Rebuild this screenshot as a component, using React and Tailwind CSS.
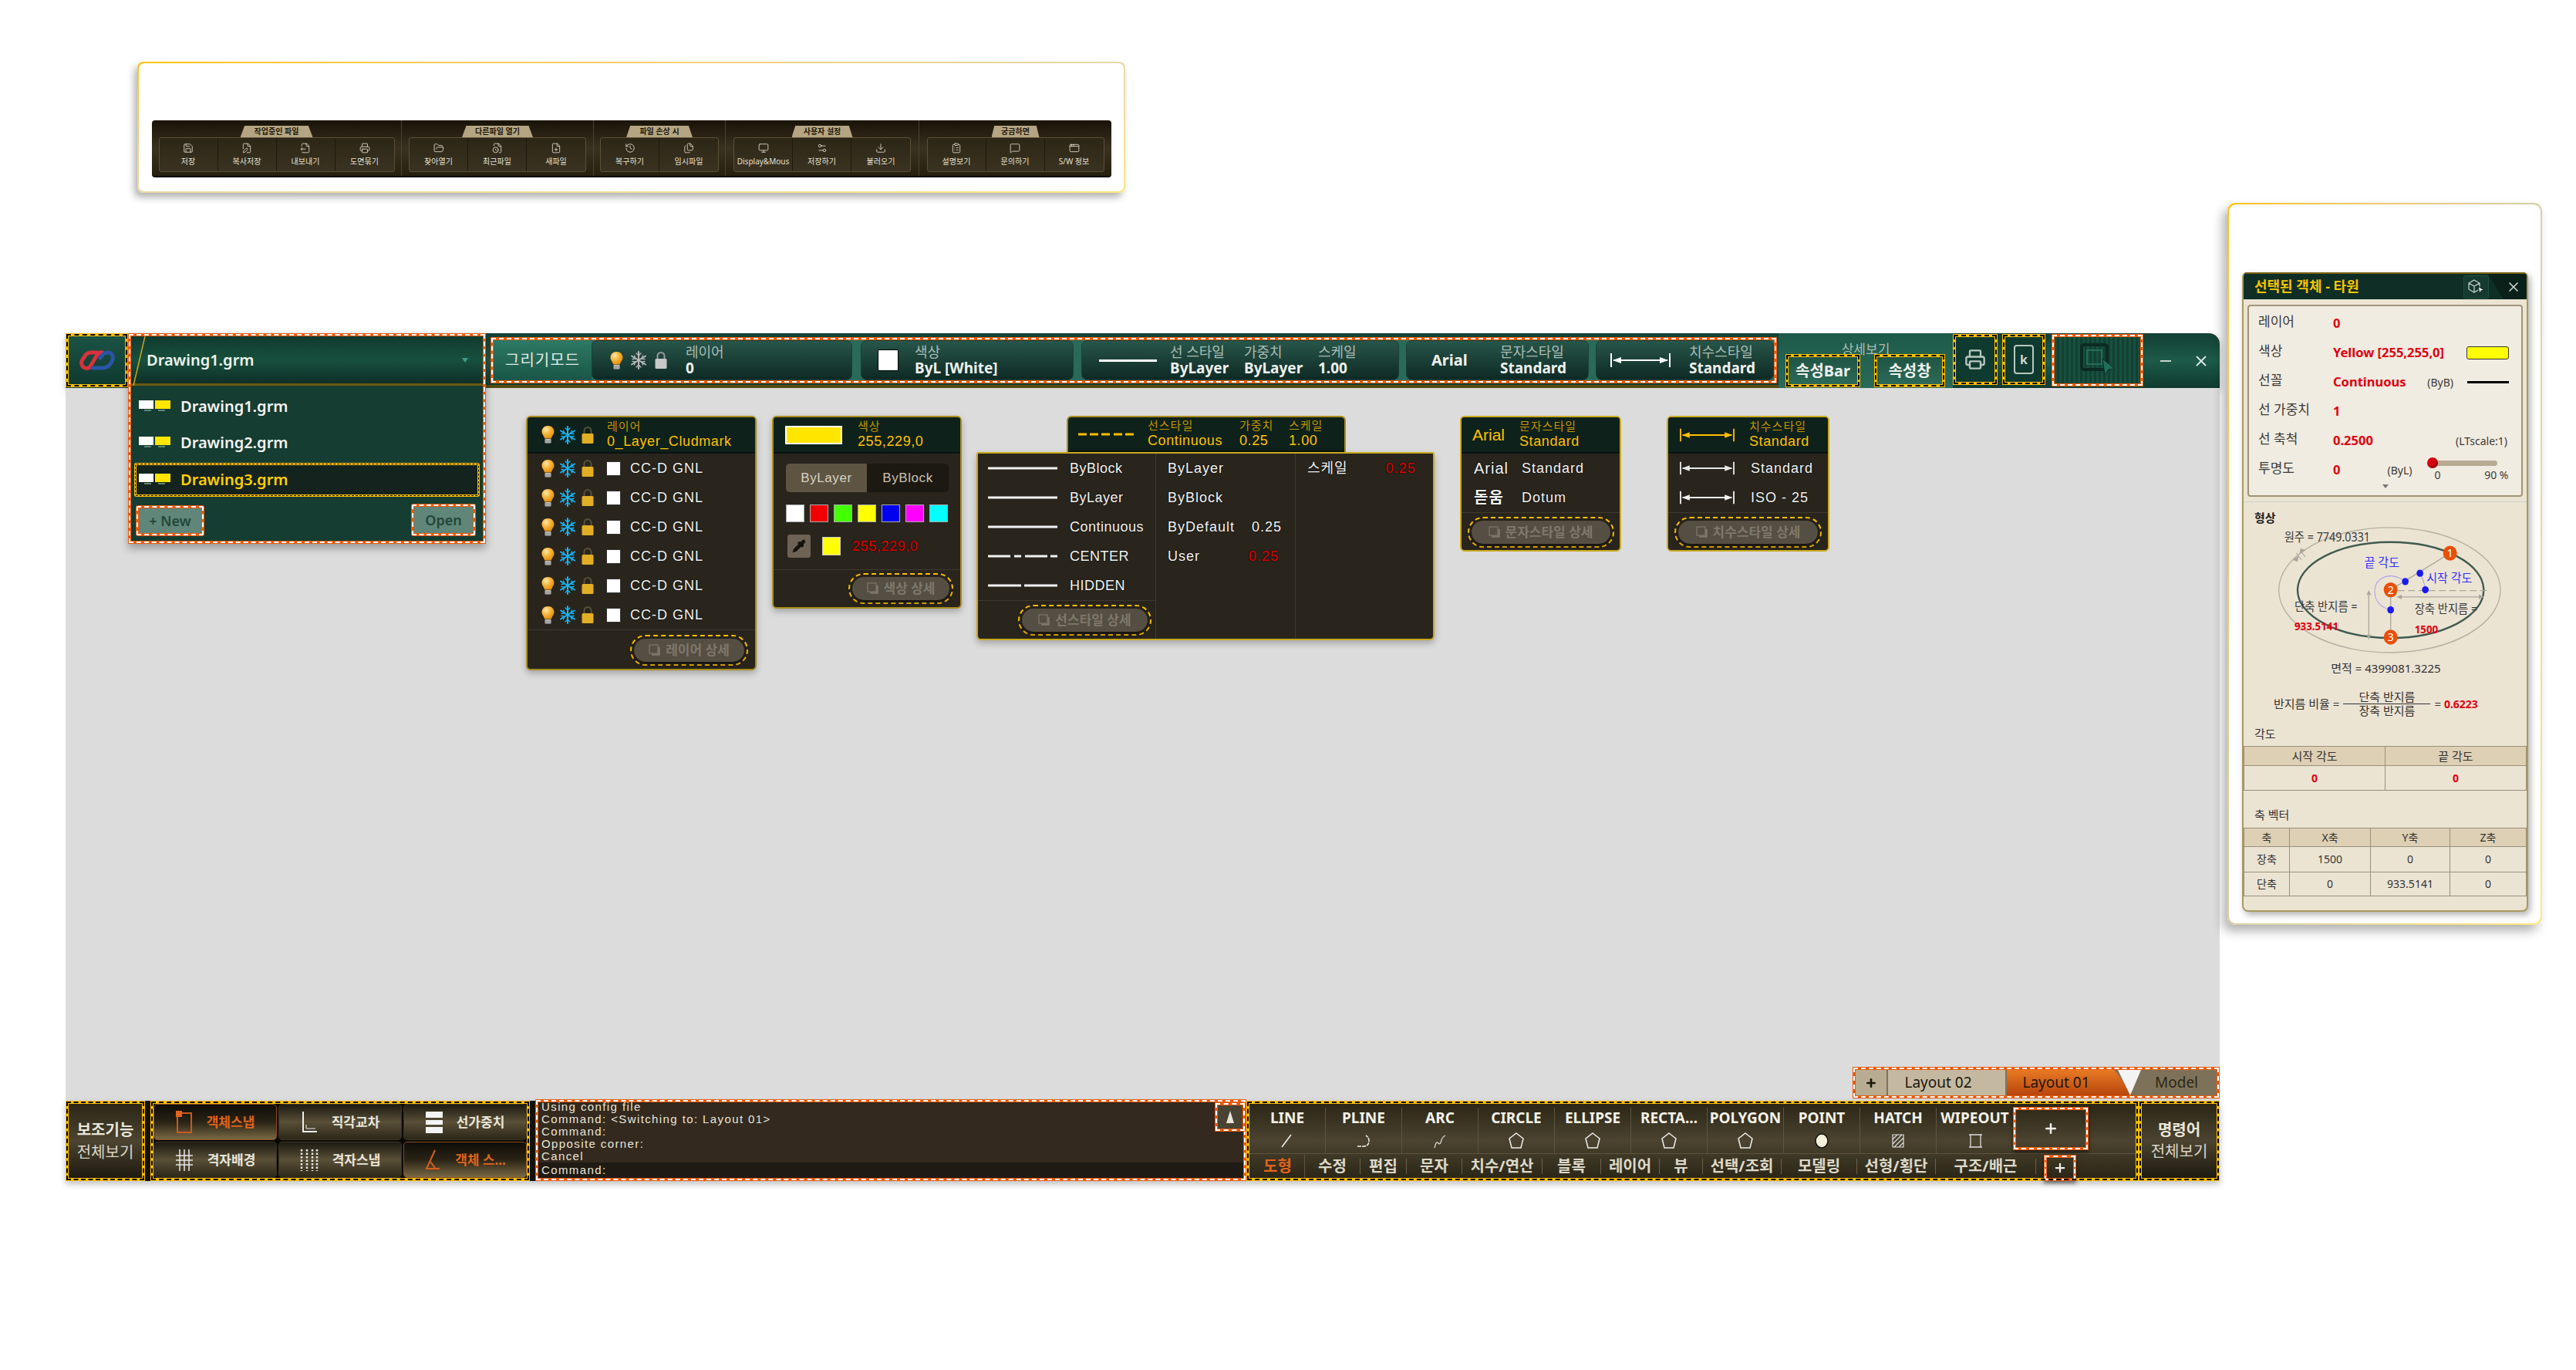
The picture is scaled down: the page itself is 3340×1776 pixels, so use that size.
import {
  Save, FilePen, FileOutput, Printer, FolderOpen, FileClock, FilePlus, History, Files,
  Monitor, Settings2, Download, ClipboardList, MessageSquare, AppWindow, X, Plus, Pipette,
} from "lucide-react";

const ORANGE = "border-[4px] border-[#e8590c] outline-2 outline-dashed outline-white outline-offset-[-3px]";
const YELLOW = "border-[4px] border-[#ffc000] outline-2 outline-dashed outline-black outline-offset-[-3px]";
const DOTUM = "font-['Liberation_Sans','Noto_Sans_CJK_KR',sans-serif]";

const toolbar = [
  { title: "작업중인 파일", w: "w-[324px]", tab: "w-[94px]", items: [[Save, "저장"], [FilePen, "복사저장"], [FileOutput, "내보내기"], [Printer, "도면묶기"]] },
  { title: "다른파일 열기", w: "w-[249px]", tab: "w-[92px]", items: [[FolderOpen, "찾아열기"], [FileClock, "최근파일"], [FilePlus, "새파일"]] },
  { title: "파일 손상 시", w: "w-[171px]", tab: "w-[86px]", items: [[History, "복구하기"], [Files, "임시파일"]] },
  { title: "사용자 설정", w: "w-[251px]", tab: "w-[79px]", items: [[Monitor, "Display&Mous"], [Settings2, "저장하기"], [Download, "불러오기"]] },
  { title: "궁금하면", w: "w-[249px]", tab: "w-[62px]", items: [[ClipboardList, "설명보기"], [MessageSquare, "문의하기"], [AppWindow, "S/W 정보"]] },
];

function Bulb() {
  return (
    <svg width="19" height="25" viewBox="0 0 19 25" className="shrink-0">
      <defs>
        <radialGradient id="bulbGlow" cx="35%" cy="30%" r="75%">
          <stop offset="0" stopColor="#ffe6a8" />
          <stop offset="0.55" stopColor="#f5b02e" />
          <stop offset="1" stopColor="#e08a10" />
        </radialGradient>
      </defs>
      <path d="M9.5 1C4.5 1 1.5 4.6 1.5 8.6c0 3.6 3 5.6 3.600 9h8.800c.6-3.400 3.600-5.400 3.600-9C17.500 4.600 14.500 1 9.500 1z" fill="url(#bulbGlow)" />
      <rect x="5.500" y="18" width="8" height="5.500" rx="1" fill="#c8c8c8" />
      <path d="M5.500 20h8M5.500 22h8" stroke="#666" strokeWidth=".7" />
    </svg>
  );
}

function Snow({ color = "#18b4f0" }) {
  return (
    <svg width="22" height="24" viewBox="0 0 22 24" className="shrink-0" stroke={color} strokeWidth="2" strokeLinecap="round">
      <path d="M11 1v22M2 6.500l18 11M20 6.500l-18 11" />
      <path d="M8 3l3 3 3-3M8 21l3-3 3 3M3 10.500l4-.5-1.500-4M19 13.500l-4 .5 1.500 4M19 10.500l-4-.5 1.500-4M3 13.500l4 .5-1.500 4" strokeWidth="1.300" fill="none" />
    </svg>
  );
}

function Lock({ body = "#e2ae26", shackle = "#58503c" }) {
  return (
    <svg width="18" height="24" viewBox="0 0 18 24" className="shrink-0">
      <path d="M4.500 11V6.500a4.500 4.500 0 0 1 9 0V11" fill="none" stroke={shackle} strokeWidth="2" />
      <rect x="1.500" y="10" width="15" height="13" rx="1.500" fill={body} />
    </svg>
  );
}

function Dim({ className }) {
  return (
    <svg viewBox="0 0 78 22" className={className} fill="currentColor" stroke="currentColor">
      <path d="M1 2v18M77 2v18" strokeWidth="2" fill="none" />
      <path d="M4 11h70" strokeWidth="2" fill="none" />
      <path d="M3 11l11-4v8zM75 11l-11-4v8z" strokeWidth="0" />
    </svg>
  );
}

function DetailBtn({ label, className }) {
  return (
    <div className={`rounded-full border-2 border-dashed border-[#ffc000] p-[3px] h-[40px] ${className}`}>
      <div className="h-full rounded-full bg-[#554e43] flex items-center justify-center gap-[6px] text-[#7e786c] text-[17px] font-bold shadow-[0_3px_6px_rgba(0,0,0,.5)]">
        <svg width="16" height="16" viewBox="0 0 16 16" className="shrink-0">
          <rect x="1" y="1" width="11" height="11" fill="none" stroke="#7e786c" strokeWidth="1.200" />
          <path d="M13.500 4v9.500H4" fill="none" stroke="#7e786c" strokeWidth="2.500" />
        </svg>
        {label}
      </div>
    </div>
  );
}

function Head({ children, className = "" }) {
  return (
    <div className={`bg-[#0e211b] flex items-center border-b-2 border-[#0a120e] ${className}`}>
      {children}
    </div>
  );
}

function HeadText({ label, value, className = "" }) {
  return (
    <div className={`flex flex-col ${DOTUM} ${className}`}>
      <span className="text-[15px] leading-[18px] text-[#c29400] tracking-[1px]">{label}</span>
      <span className="text-[18px] leading-[21px] text-[#ffc000] tracking-[.6px] whitespace-nowrap">{value}</span>
    </div>
  );
}

function Row({ children, className = "" }) {
  return (
    <div className={`h-[38px] flex items-center text-[18px] text-[#f2f2f2] tracking-[1px] whitespace-nowrap [text-shadow:0_0_2px_#000] ${DOTUM} ${className}`}>
      {children}
    </div>
  );
}

function LayerPanel() {
  return (
    <div className="w-[299px] h-[330px] rounded-[6px] border-2 border-[#a88c1c] bg-[#29251d] overflow-hidden shadow-[0_4px_8px_rgba(0,0,0,.25)] shrink-0">
      <Head className="h-[47px] pl-[17px]">
        <Bulb /><div className="w-[5px]" /><Snow /><div className="w-[6px]" /><Lock />
        <HeadText className="ml-[16px]" label="레이어" value="0_Layer_Cludmark" />
      </Head>
      <div className="pl-[17px]">
        {[0, 1, 2, 3, 4, 5].map((i) => (
          <Row key={i}>
            <Bulb /><div className="w-[5px]" /><Snow /><div className="w-[6px]" /><Lock />
            <div className="ml-[15px] w-[19px] h-[19px] bg-white border border-[#333] shrink-0" />
            <span className="ml-[12px]">CC-D GNL</span>
          </Row>
        ))}
      </div>
      <div className="border-t border-[#3f3a30] flex justify-end pt-[6px] pr-[9px]">
        <DetailBtn label="레이어 상세" className="w-[153px]" />
      </div>
    </div>
  );
}

const swatches = ["bg-white", "bg-[#f00000]", "bg-[#44ff00]", "bg-[#ffff00]", "bg-[#0000f0]", "bg-[#ff00ff]", "bg-[#00ffff]"];

function ColorPanel() {
  return (
    <div className="w-[246px] h-[250px] ml-[20px] rounded-[6px] border-2 border-[#a88c1c] bg-[#29251d] overflow-hidden shadow-[0_4px_8px_rgba(0,0,0,.25)] shrink-0">
      <Head className="h-[47px] pl-[15px]">
        <div className="w-[74px] h-[24px] bg-[#ffe600] border-2 border-white" />
        <HeadText className="ml-[20px]" label="색상" value="255,229,0" />
      </Head>
      <div className={`mt-[13px] ml-[16px] w-[211px] h-[37px] flex rounded-[5px] overflow-hidden text-[17px] tracking-[.6px] ${DOTUM}`}>
        <div className="w-[105px] bg-[#5e5442] text-[#d8d2c0] flex items-center justify-center">ByLayer</div>
        <div className="flex-1 bg-[#1c1812] text-[#c8c2b2] flex items-center justify-center">ByBlock</div>
      </div>
      <div className="mt-[16px] ml-[16px] flex gap-[7px]">
        {swatches.map((c, i) => (
          <div key={i} className={`w-[24px] h-[23px] border border-[#aaa] ${c}`} />
        ))}
      </div>
      <div className="mt-[16px] ml-[18px] flex items-center">
        <div className="w-[30px] h-[30px] rounded-[3px] bg-[#6d6254] flex items-center justify-center">
          <Pipette size={18} color="#15120d" fill="#15120d" />
        </div>
        <div className="ml-[15px] w-[24px] h-[24px] bg-[#ffff00] border border-[#ccc]" />
        <span className={`ml-[15px] text-[18px] text-[#e00000] tracking-[.6px] [text-shadow:0_0_2px_#000] ${DOTUM}`}>255,229,0</span>
      </div>
      <div className="mt-[15px] border-t border-[#3f3a30] flex justify-end pt-[4px] pr-[9px]">
        <DetailBtn label="색상 상세" className="w-[136px]" />
      </div>
    </div>
  );
}

const lineRows = [
  ["ByBlock", "M0 2h90"],
  ["ByLayer", "M0 2h90"],
  ["Continuous", "M0 2h90"],
  ["CENTER", "M0 2h29M34 2h9M48 2h29M81 2h9"],
  ["HIDDEN", "M0 2h43M47 2h43"],
];

function LinePanel() {
  return (
    <div className="w-[594px] ml-[19px] shrink-0 flex flex-col">
      <div className="ml-[117px] w-[362px] rounded-t-[6px] border-2 border-b-0 border-[#a88c1c] overflow-hidden">
        <Head className="pl-[13px] h-[45px]">
          <svg width="72" height="4" viewBox="0 0 72 4" className="shrink-0">
            <path d="M0 2h11M15 2h11M30 2h11M46 2h11M61 2h11" stroke="#ffc000" strokeWidth="3" />
          </svg>
          <HeadText className="ml-[18px] w-[119px]" label="선스타일" value="Continuous" />
          <HeadText className="w-[64px]" label="가중치" value="0.25" />
          <HeadText label="스케일" value="1.00" />
        </Head>
      </div>
      <div className="h-[244px] rounded-b-[6px] rounded-t-[3px] border-2 border-[#c9a91e] bg-[#29251d] flex shadow-[0_4px_8px_rgba(0,0,0,.25)]">
        <div className="w-[231px] border-r border-[#3f3a30] flex flex-col">
          {lineRows.map(([name, d]) => (
            <Row key={name} className="pl-[13px]">
              <svg width="90" height="4" viewBox="0 0 90 4" className="shrink-0">
                <path d={d} stroke="#f2f2f2" strokeWidth="3" />
              </svg>
              <span className="ml-[16px] tracking-[.5px]">{name}</span>
            </Row>
          ))}
          <div className="border-t border-[#3f3a30] flex justify-end pt-[5px] pr-[5px]">
            <DetailBtn label="선스타일 상세" className="w-[173px]" />
          </div>
        </div>
        <div className="w-[181px] border-r border-[#3f3a30] pl-[15px] flex flex-col">
          <Row>ByLayer</Row>
          <Row>ByBlock</Row>
          <Row>ByDefault<span className="ml-[22px]">0.25</span></Row>
          <Row>User<span className="ml-[63px] text-[#e00000]">0.25</span></Row>
        </div>
        <div className="flex-1 pl-[15px]">
          <Row>스케일<span className="ml-[49px] text-[#e00000]">0.25</span></Row>
        </div>
      </div>
    </div>
  );
}

function TextPanel() {
  return (
    <div className="w-[209px] h-[176px] ml-[33px] rounded-[6px] border-2 border-[#c9a91e] bg-[#29251d] overflow-hidden shrink-0">
      <Head className={`h-[47px] pl-[14px] ${DOTUM}`}>
        <span className="text-[21px] text-[#ffc000] w-[61px]">Arial</span>
        <HeadText label="문자스타일" value="Standard" />
      </Head>
      <div className="pl-[16px]">
        <Row><span className="w-[62px] text-[20px]">Arial</span>Standard</Row>
        <Row><span className="w-[62px] text-[20px] font-bold">돋움</span>Dotum</Row>
      </div>
      <div className="border-t border-[#3f3a30] flex justify-center pt-[5px]">
        <DetailBtn label="문자스타일 상세" className="w-[190px]" />
      </div>
    </div>
  );
}

function DimPanel() {
  return (
    <div className="w-[211px] h-[176px] ml-[59px] rounded-[6px] border-2 border-[#c9a91e] bg-[#29251d] overflow-hidden shrink-0">
      <Head className="h-[47px] pl-[13px]">
        <Dim className="w-[75px] h-[20px] text-[#ffc000] shrink-0" />
        <HeadText className="ml-[17px]" label="치수스타일" value="Standard" />
      </Head>
      <div className="pl-[13px]">
        <Row><Dim className="w-[75px] h-[20px] text-[#e8e8e8] shrink-0" /><span className="ml-[19px]">Standard</span></Row>
        <Row><Dim className="w-[75px] h-[20px] text-[#f4f4f4] shrink-0" /><span className="ml-[19px]">ISO - 25</span></Row>
      </div>
      <div className="border-t border-[#3f3a30] flex justify-center pt-[5px]">
        <DetailBtn label="치수스타일 상세" className="w-[191px]" />
      </div>
    </div>
  );
}

function BarText({ label, value, className = "" }) {
  return (
    <div className={`flex flex-col whitespace-nowrap ${className}`}>
      <span className="text-[18px] leading-[20px] text-[#a9bcb4]">{label}</span>
      <span className="text-[19px] leading-[22px] font-bold text-[#eef1ee]">{value}</span>
    </div>
  );
}

function BarSection({ className, children }) {
  return (
    <div className={`h-full rounded-[8px] flex items-center bg-linear-to-b from-[#28564a] to-[#0e2a24] border border-[#1a4035] ${className}`}>
      {children}
    </div>
  );
}

function FileIcon() {
  return (
    <div className="flex flex-col shrink-0 -mt-[2px]">
      <div className="flex gap-[2px]">
        <div className="w-[19px] h-[11px] bg-white" />
        <div className="w-[20px] h-[11px] bg-[#ffe600]" />
      </div>
      <div className="flex justify-around mt-[1px] px-[3px]">
        <div className="w-[9px] h-[2px] bg-[#5f8678]" />
        <div className="w-[9px] h-[2px] bg-[#5f8678]" />
      </div>
    </div>
  );
}

function FileMenu() {
  return (
    <div className="relative w-[464px] h-[71px] shrink-0">
      <div className={`absolute left-0 top-0 z-20 w-[464px] h-[273px] flex flex-col bg-[#153d31] shadow-[0_6px_10px_rgba(0,0,0,.3)] ${ORANGE}`}>
        <div className="relative h-[64px] shrink-0 flex items-center pl-[20px] pr-[18px] bg-linear-to-b from-[#123a2e] via-[#17503e] to-[#0f2f28] border-b-[3px] border-[#6b5a10]">
          <svg width="20" height="64" viewBox="0 0 20 64" className="absolute left-0 top-0">
            <path d="M18 0L3 64" stroke="#c9a91e" strokeWidth="1.500" />
          </svg>
          <span className="text-[20px] font-semibold text-[#eef4ee]">Drawing1.grm</span>
          <svg width="10" height="8" viewBox="0 0 10 8" className="ml-auto"><path d="M1 1h8L5 7z" fill="#3aa088" /></svg>
        </div>
        <div className="flex-1 flex flex-col px-[4px]">
          <div className="h-[47px] mt-[3px] flex items-center pl-[6px] gap-[13px]">
            <FileIcon /><span className="text-[20px] font-semibold text-[#f4f4f4]">Drawing1.grm</span>
          </div>
          <div className="h-[47px] flex items-center pl-[6px] gap-[13px]">
            <FileIcon /><span className="text-[20px] font-semibold text-[#f4f4f4]">Drawing2.grm</span>
          </div>
          <div className="h-[44px] mt-[3px] flex items-center pl-[3px] gap-[13px] bg-[#14231d] rounded-[3px] border-[3px] border-[#ffc000] outline-1 outline-dashed outline-black outline-offset-[-2px]">
            <FileIcon /><span className="text-[20px] font-semibold text-[#ffd000]">Drawing3.grm</span>
          </div>
          <div className="flex justify-between items-end mt-[9px] pl-[2px] pr-[5px]">
            <div className={`w-[89px] h-[40px] rounded-[3px] bg-[#5f8678] flex items-center justify-center text-[18px] font-semibold text-[#23463a] ${ORANGE}`}>+ New</div>
            <div className={`w-[84px] h-[42px] rounded-[3px] bg-[#5f8678] flex items-center justify-center text-[18px] font-semibold text-[#23463a] ${ORANGE}`}>Open</div>
          </div>
        </div>
      </div>
    </div>
  );
}

function TopBar() {
  return (
    <div className="h-[71px] flex rounded-t-[4px] rounded-tr-[14px] bg-linear-to-b from-[#133f33] via-[#1d5a4a] to-[#0f3a2f] shadow-[0_4px_8px_rgba(0,0,0,.25)] text-[#eef1ee]">
      <div className={`w-[81px] h-[70px] shrink-0 flex items-center justify-center bg-linear-to-b from-[#1b5344] to-[#0f3a2f] ${YELLOW}`}>
        <svg width="46" height="26" viewBox="0 0 46 26" fill="none" strokeWidth="5" strokeLinecap="round">
          <path d="M30 3c-3-1-5 0-7 3L14 21c-2 3-6 3-9 1-3-3-3-7-1-10l4-6c2-2 4-3 7-3h7" stroke="#d8323c" />
          <path d="M27 10c3-5 6-7 10-7 5 0 7 4 6 9-2 7-7 11-13 11H17" stroke="#2a54a8" />
        </svg>
      </div>
      <FileMenu />
      <div className="w-[1676px] shrink-0 pl-[6px] pt-[5px] border-b-[4px] border-[#584a12]">
        <div className={`h-[60px] w-[1668px] flex items-stretch bg-[#2a6a58] ${ORANGE}`}>
          <div className="w-[127px] shrink-0 flex items-center justify-center text-[20px] text-[#e2eae6] tracking-[1px] bg-linear-to-b from-[#2d7a64] to-[#1a5647]">그리기모드</div>
          <BarSection className="w-[338px] pl-[22px]">
            <Bulb /><div className="w-[8px]" /><Snow color="#b9b9b9" /><div className="w-[9px]" /><Lock body="#c8c8c8" shackle="#9a9a9a" />
            <BarText className="ml-[23px]" label="레이어" value="0" />
          </BarSection>
          <div className="w-[11px] shrink-0" />
          <BarSection className="w-[276px] pl-[21px]">
            <div className="w-[27px] h-[28px] bg-white border border-black rounded-[2px]" />
            <BarText className="ml-[21px]" label="색상" value="ByL [White]" />
          </BarSection>
          <div className="w-[10px] shrink-0" />
          <BarSection className="w-[412px] pl-[22px]">
            <div className="w-[75px] h-[3px] bg-white" />
            <BarText className="ml-[17px] w-[96px]" label="선 스타일" value="ByLayer" />
            <BarText className="w-[96px]" label="가중치" value="ByLayer" />
            <BarText label="스케일" value="1.00" />
          </BarSection>
          <div className="w-[9px] shrink-0" />
          <BarSection className="w-[237px] pl-[32px]">
            <span className="w-[89px] text-[20px] font-bold">Arial</span>
            <BarText label="문자스타일" value="Standard" />
          </BarSection>
          <div className="w-[9px] shrink-0" />
          <BarSection className="flex-1 pl-[18px]">
            <Dim className="w-[78px] h-[22px] text-white shrink-0" />
            <BarText className="ml-[24px]" label="치수스타일" value="Standard" />
          </BarSection>
        </div>
      </div>
      <div className="w-[226px] shrink-0 flex flex-col bg-linear-to-b from-[#1d5a4a] to-[#2a6a58]">
        <div className="mt-[12px] h-[18px] text-center text-[17px] leading-[18px] text-[#a9bcb4]">상세보기</div>
        <div className="flex mt-[-3px] pl-[9px] gap-[18px] relative z-10">
          <div className={`w-[97px] h-[43px] flex items-center justify-center bg-linear-to-b from-[#1f5443] to-[#2d6a58] text-[20px] font-bold text-[#eef1ee] ${YELLOW}`}>속성Bar</div>
          <div className={`w-[92px] h-[43px] flex items-center justify-center bg-linear-to-b from-[#1f5443] to-[#2d6a58] text-[20px] font-bold text-[#eef1ee] ${YELLOW}`}>속성창</div>
        </div>
      </div>
      <div className={`w-[58px] h-[66px] mt-[1px] shrink-0 flex items-center justify-center bg-[#0f3a2f] ${YELLOW}`}>
        <Printer size={28} color="#b8c8c0" strokeWidth={2} />
      </div>
      <div className={`w-[56px] h-[66px] mt-[1px] ml-[6px] shrink-0 flex items-center justify-center bg-[#0f3a2f] ${YELLOW}`}>
        <div className="w-[26px] h-[38px] rounded-[4px] border-2 border-[#b8c8c0] flex items-center justify-center text-[16px] font-bold text-[#cfd8d2]">k</div>
      </div>
      <div className={`w-[119px] h-[68px] mt-[1px] ml-[8px] shrink-0 flex items-center justify-center bg-[repeating-linear-gradient(90deg,#17503f_0,#17503f_3px,#124032_3px,#124032_6px)] ${ORANGE}`}>
        <svg width="46" height="44" viewBox="0 0 46 44" fill="none">
          <rect x="2" y="2" width="33" height="32" rx="3" stroke="#0d2a22" strokeWidth="4" />
          <rect x="9" y="9" width="19" height="18" stroke="#2a7a62" strokeWidth="1.500" />
          <path d="M29 20l3 21 5-7 8-1z" fill="#1f6e58" stroke="#0d2a22" />
        </svg>
      </div>
      <div className="flex-1 flex items-center pl-[22px] rounded-tr-[14px]">
        <span className="w-[14px] h-[2px] bg-[#c8d4ce]" />
        <X size={22} color="#dfe6e2" strokeWidth={2} className="ml-[28px]" />
      </div>
    </div>
  );
}

function LayoutTabs() {
  return (
    <div className={`self-end flex w-[476px] h-[41px] text-[19px] text-[#1c170d] mb-[3px] bg-[#7d7259] ${ORANGE}`}>
      <div className="w-[40px] bg-[#b8ad92] flex items-center justify-center font-bold"><Plus size={16} strokeWidth={4} /></div>
      <div className="w-[152px] ml-[2px] bg-[#c4b9a0] flex items-center justify-center pr-[22px]">Layout 02</div>
      <div className="w-[164px] ml-[2px] bg-linear-to-b from-[#e87a24] to-[#b8450c] flex items-center justify-center pr-[36px] [clip-path:polygon(0_0,85%_0,100%_100%,0_100%)]">Layout 01</div>
      <div className="flex-1 relative flex items-center justify-center pl-[4px] text-[#2d2716]">
        <svg width="30" height="33" viewBox="0 0 30 33" className="absolute -left-[20px] top-0"><path d="M0 0h30L16 33z" fill="#f3f3f3" /></svg>
        Model
      </div>
    </div>
  );
}

function SnapBtn({ label, active, children }) {
  return (
    <div className={`flex items-center justify-center gap-[18px] rounded-[5px] text-[17px] font-bold border ${active ? "bg-linear-to-b from-[#0f0d08] via-[#2a2416] to-[#7a6a44] border-[#8a4b20] text-[#e2641a]" : "bg-linear-to-b from-[#1e1b12] via-[#5a5038] to-[#2c2718] border-[#3a3424] text-[#e9e6da]"}`}>
      {children}
      {label}
    </div>
  );
}

const drawTools = [
  ["LINE", <path key="a" d="M3 19L15 3" stroke="#eee" strokeWidth="1.500" />],
  ["PLINE", <path key="a" d="M2 18h8c5 0 7-3 7-7s-2-6-4-7" fill="none" stroke="#eee" strokeWidth="1.500" strokeDasharray="5 1" />],
  ["ARC", <path key="a" d="M3 20c2-8 3-8 5-6s3 0 4-4 3-5 5-6" fill="none" stroke="#ddd" strokeWidth="1.200" />],
  ["CIRCLE", <path key="a" d="M10 1l9 7-3 12H4L1 8z" fill="none" stroke="#eee" strokeWidth="1.500" />],
  ["ELLIPSE", <path key="a" d="M10 1l9 7-3 12H4L1 8z" fill="none" stroke="#eee" strokeWidth="1.500" />],
  ["RECTA...", <path key="a" d="M10 1l9 7-3 12H4L1 8z" fill="none" stroke="#eee" strokeWidth="1.500" />],
  ["POLYGON", <path key="a" d="M10 1l9 7-3 12H4L1 8z" fill="none" stroke="#eee" strokeWidth="1.500" />],
  ["POINT", <ellipse key="a" cx="10" cy="11" rx="8" ry="9" fill="#f4f0dc" stroke="#111" strokeWidth="1.500" />],
  ["HATCH", <path key="a" d="M3 3h14v16H3zM3 9l6-6M3 15L15 3M5 19L17 7M11 19l6-6" fill="none" stroke="#ddd" strokeWidth="1.200" />],
  ["WIPEOUT", <path key="a" d="M4 3h13v16H4zM2 3h4M15 3h4M2 19h4M15 19h4" fill="none" stroke="#ddd" strokeWidth="1.300" />],
];

const cmdTabs = [
  ["수정", "w-[72px]"], ["편집", "w-[60px]"], ["문자", "w-[72px]"], ["치수/연산", "w-[104px]"], ["블록", "w-[76px]"],
  ["레이어", "w-[76px]"], ["뷰", "w-[56px]"], ["선택/조회", "w-[102px]"], ["모델링", "w-[98px]"], ["선형/횡단", "w-[102px]"], ["구조/배근", "w-[130px]"],
];

function BottomBar() {
  return (
    <div className="h-[104px] flex bg-[#14110a] shadow-[0_4px_8px_rgba(0,0,0,.25)] text-[#e9e6da]">
      <div className={`w-[103px] h-[104px] shrink-0 flex flex-col items-center justify-center gap-[5px] bg-linear-to-b from-[#2b2617] via-[#4c4430] to-[#1e1a10] ${YELLOW}`}>
        <span className="text-[20px] font-bold leading-[24px] whitespace-nowrap">보조기능</span>
        <span className="text-[20px] leading-[24px] text-[#d8d4c8] whitespace-nowrap">전체보기</span>
      </div>
      <div className={`w-[492px] h-[104px] ml-[7px] shrink-0 grid grid-cols-3 grid-rows-2 gap-[2px] bg-[#0c0a06] ${YELLOW}`}>
        <SnapBtn label="객체스냅" active>
          <svg width="22" height="30" viewBox="0 0 22 30" fill="none"><rect x="2" y="3" width="18" height="25" stroke="#c85a20" strokeWidth="2" /><rect x="0" y="0" width="8" height="8" fill="#e2641a" /></svg>
        </SnapBtn>
        <SnapBtn label="직각교차">
          <svg width="22" height="30" viewBox="0 0 22 30" fill="none" stroke="#eee" strokeWidth="2"><path d="M3 1v26h18" /><path d="M7 18v5h12" strokeWidth="1" /></svg>
        </SnapBtn>
        <SnapBtn label="선가중치">
          <svg width="22" height="30" viewBox="0 0 22 30" fill="#f4f4f4"><rect y="1" width="22" height="8" /><rect y="12" width="22" height="6" /><rect y="21" width="22" height="8" /></svg>
        </SnapBtn>
        <SnapBtn label="격자배경">
          <svg width="24" height="30" viewBox="0 0 24 30" fill="none" stroke="#e8e8e8" strokeWidth="1.500"><path d="M6 1v28M12 1v28M18 1v28M1 9h22M1 15h22M1 21h22" /></svg>
        </SnapBtn>
        <SnapBtn label="격자스냅">
          <svg width="24" height="30" viewBox="0 0 24 30" fill="none" stroke="#e8e8e8" strokeWidth="2.500" strokeDasharray="2.500 2"><path d="M2 1v28M9 1v28M16 1v28M22 1v28" /></svg>
        </SnapBtn>
        <SnapBtn label="객체 스..." active>
          <svg width="22" height="30" viewBox="0 0 22 30" fill="none" stroke="#d4601e" strokeWidth="2"><path d="M14 2L3 26h17" /><path d="M8 17l6 8" /></svg>
        </SnapBtn>
      </div>
      <div className={`w-[922px] h-[106px] -mt-[2px] ml-[7px] shrink-0 relative flex flex-col bg-[#33291e] ${ORANGE} ${DOTUM}`}>
        <div className="h-[79px] pl-[4px] text-[15px] leading-[16px] tracking-[1.400px] text-[#e8e4d8]">
          <div className="-mt-[2px]">Using config file</div>
          <div>Command: &lt;Switching to: Layout 01&gt;</div>
          <div>Command:</div>
          <div>Opposite corner:</div>
          <div>Cancel</div>
        </div>
        <div className="h-[2px] bg-[#9a9488]" />
        <div className="flex-1 pl-[4px] bg-[#1f1a14] text-[15px] leading-[20px] tracking-[1.400px] text-[#e8e4d8]">Command:</div>
        <div className={`absolute right-[-3px] top-[0px] w-[40px] h-[38px] flex items-center justify-center bg-[#4a4333] ${ORANGE}`}>
          <svg width="12" height="18" viewBox="0 0 12 18"><path d="M6 1l5 16H1z" fill="#e8e4d8" /></svg>
        </div>
      </div>
      <div className={`w-[1157px] h-[104px] shrink-0 flex flex-col bg-linear-to-b from-[#2b2617] via-[#4c4430] to-[#2b2617] ${YELLOW}`}>
        <div className="flex h-[65px] pt-[5px] border-b border-[#5e5540]">
          {drawTools.map(([name, icon], i) => (
            <div key={name} className={`w-[99px] shrink-0 flex flex-col items-center ${i < 9 ? "border-r border-[#5e5540]" : ""}`}>
              <span className="text-[19px] leading-[26px] font-bold text-[#f4f2e8] whitespace-nowrap">{name}</span>
              <svg width="20" height="22" viewBox="0 0 20 22" className="mt-[6px]">{icon}</svg>
            </div>
          ))}
          <div className={`w-[98px] h-[56px] shrink-0 flex items-center justify-center -mt-[1px] shadow-[0_3px_5px_rgba(0,0,0,.5)] ${ORANGE}`}>
            <Plus size={20} color="#eee" strokeWidth={3} />
          </div>
        </div>
        <div className="flex-1 flex items-center text-[20px] font-bold whitespace-nowrap">
          <div className="w-[72px] pl-[18px] text-[#e2641a] border-r border-[#5e5540]">도형</div>
          {cmdTabs.map(([name, w]) => (
            <span key={name} className={`${w} h-[20px] leading-[20px] text-center text-[#ddd8c8] border-r border-[#6a614c]`}>{name}</span>
          ))}
          <div className={`w-[42px] h-[34px] ml-[10px] -mb-[4px] flex items-center justify-center shadow-[0_3px_5px_rgba(0,0,0,.5)] ${ORANGE}`}>
            <Plus size={18} color="#eee" strokeWidth={3} />
          </div>
        </div>
      </div>
      <div className={`flex-1 h-[104px] flex flex-col items-center justify-center gap-[4px] bg-linear-to-b from-[#2b2617] via-[#4c4430] to-[#1e1a10] ${YELLOW}`}>
        <span className="text-[20px] font-bold leading-[24px]">명령어</span>
        <span className="text-[20px] leading-[24px] text-[#d8d4c8] whitespace-nowrap">전체보기</span>
      </div>
    </div>
  );
}

function PropRow({ label, children }) {
  return (
    <div className="h-[38px] flex items-center pl-[12px] pr-[12px] relative">
      <span className="w-[97px] shrink-0 text-[17px] text-[#3a3a3a] -mt-[5px]">{label}</span>
      {children}
    </div>
  );
}

function Val({ children, className = "" }) {
  return <span className={`text-[16.500px] font-bold text-[#e00010] ${className}`}>{children}</span>;
}

function Ellipse() {
  return (
    <svg viewBox="80 60 1113 490" preserveAspectRatio="none" className="block w-[371px] h-[175px]">
      <ellipse cx="648" cy="295" rx="431" ry="227" fill="none" stroke="#b5b0a4" strokeWidth="4" />
      <ellipse cx="652" cy="295" rx="362" ry="174" fill="none" stroke="#3f5a50" strokeWidth="7" />
      <path d="M652 294L883 161M652 294V466" stroke="#aaa79c" strokeWidth="4" />
      <path d="M680 297H1035" stroke="#aaa79c" strokeWidth="4" strokeDasharray="26 14" />
      <path d="M680 320H1010" stroke="#aaa79c" strokeWidth="4" />
      <path d="M675 320l20-9v18zM1015 320l-20-9v18z" fill="#aaa79c" />
      <path d="M567 300V470" stroke="#aaa79c" strokeWidth="4" />
      <path d="M567 295l-9 18h18zM567 475l-9-18h18z" fill="#aaa79c" />
      <path d="M270 185l25-15-5 22zM322 150l-25 15 5-22z" fill="#aaa79c" />
      <path d="M285 160l20 25M300 150l20 25" stroke="#aaa79c" strokeWidth="3" />
      <path d="M700 258C640 225 590 255 590 300C590 340 620 360 652 367" fill="none" stroke="#a8a0e8" strokeWidth="3" />
      <path d="M766 234Q782 260 787 294" fill="none" stroke="#a8a0e8" strokeWidth="3" />
      {[[709, 264], [766, 234], [787, 294], [652, 367]].map(([x, y]) => (
        <circle key={x} cx={x} cy={y} r="13" fill="#1a1aee" />
      ))}
      {[[883, 161, 1], [652, 294, 2], [652, 466, 3]].map(([x, y, n]) => (
        <g key={n}>
          <circle cx={x} cy={y} r="27" fill="#e8500a" />
          <text x={x} y={y + 15} textAnchor="middle" fontSize="42" fill="#fff">{n}</text>
        </g>
      ))}
      <g fontSize="43" fill="#3a3a3a">
        <text x="238" y="120">원주 = 7749.0331</text>
        <text x="278" y="370">단축 반지름 =</text>
        <text x="745" y="380">장축 반지름 =</text>
      </g>
      <g fontSize="45" fill="#3030ff">
        <text x="550" y="212">끝 각도</text>
        <text x="792" y="266">시작 각도</text>
      </g>
      <g fontSize="40" fontWeight="700" fill="#e00010">
        <text x="278" y="440">933.5141</text>
        <text x="745" y="452">1500</text>
      </g>
    </svg>
  );
}

function PropsPanel() {
  return (
    <div className="w-[371px] h-[829px] rounded-[8px] rounded-t-[6px] border-x-2 border-b-2 border-[#a89a60] bg-[#ece4d3] overflow-hidden shadow-[3px_4px_8px_rgba(0,0,0,.3)]">
      <div className="relative h-[35px] flex items-center pl-[14px] bg-[#0f2e25] border-t-2 border-[#7a6414]">
        <span className="text-[18px] font-bold text-[#f5c400]">선택된 객체 - 타원</span>
        <div className="ml-auto mr-[49px] w-[33px] h-[30px] rounded-[3px] bg-[#163a30] border border-[#1f5040] flex items-center justify-center">
          <svg width="24" height="20" viewBox="0 0 24 20" fill="none" stroke="#c8d4ce" strokeWidth="1.200"><path d="M9 1l7 4v8l-7 4-7-4V5zM2 5l7 4 7-4M9 9v8" /><path d="M14 9l2 10 2-4 4-1z" fill="#e8eeea" stroke="#0f2e25" /></svg>
        </div>
        <svg width="50" height="35" viewBox="0 0 50 35" className="absolute right-0 top-0"><path d="M0 0L20 33H50V0z" fill="#0a2119" /></svg>
        <X size={20} color="#c8d4ce" strokeWidth={2} className="absolute right-[7px] top-[7px]" />
      </div>
      <div className="mx-[5px] mt-[7px] h-[249px] rounded-[4px] border-2 border-[#a09378] bg-[#f1ece1] pt-[3px] relative">
        <PropRow label="레이어"><Val>0</Val></PropRow>
        <PropRow label="색상">
          <Val>Yellow [255,255,0]</Val>
          <div className="ml-auto mr-[4px] w-[55px] h-[17px] rounded-[3px] bg-[#ffff00] border border-[#333]" />
        </PropRow>
        <PropRow label="선꼴">
          <Val>Continuous</Val>
          <span className="ml-auto text-[14px] text-[#3a3a3a]">(ByB)</span>
          <div className="ml-[18px] mr-[4px] w-[54px] h-[3px] bg-black" />
        </PropRow>
        <PropRow label="선 가중치"><Val>1</Val></PropRow>
        <PropRow label="선 축척">
          <Val>0.2500</Val>
          <span className="ml-auto mr-[6px] text-[14px] text-[#3a3a3a]">(LTscale:1)</span>
        </PropRow>
        <PropRow label="투명도">
          <Val>0</Val>
          <span className="ml-[61px] text-[14px] text-[#3a3a3a]">(ByL)</span>
          <div className="ml-[21px] w-[104px] flex flex-col">
            <div className="w-[90px] h-[7px] rounded-full bg-[#b8ab92] relative mt-[4px]">
              <div className="absolute -left-[1px] -top-[4px] w-[14px] h-[14px] rounded-full bg-[#d80010] shadow-[inset_-2px_-2px_3px_rgba(0,0,0,.3)]" />
            </div>
            <div className="flex justify-between text-[14px] leading-[20px] text-[#3a3a3a] pl-[8px] mt-[2px]">
              <span>0</span><span>90 %</span>
            </div>
          </div>
        </PropRow>
        <svg width="8" height="5" viewBox="0 0 8 5" className="mx-auto"><path d="M0 0h8L4 5z" fill="#777" /></svg>
      </div>
      <div className="mt-[6px] border-t border-[#c8d0d0] h-px" />
      <div className="pl-[14px] pt-[10px] text-[15px] leading-[20px] font-bold text-[#222]">형상</div>
      <Ellipse />
      <div className="text-center text-[15px] leading-[20px] text-[#333] pl-[2px]">면적 = 4399081.3225</div>
      <div className="mt-[18px] h-[36px] pl-[39px] flex items-center text-[15px] text-[#333]">
        <span className="whitespace-nowrap">반지름 비율 =</span>
        <div className="ml-[5px] w-[113px] flex flex-col items-center leading-[17px] shrink-0">
          <span className="border-b-[1.500px] border-[#333] w-full text-center">단축 반지름</span>
          <span>장축 반지름</span>
        </div>
        <span className="ml-[5px] whitespace-nowrap">= <b className="text-[#e00010] text-[14px]">0.6223</b></span>
      </div>
      <div className="pl-[14px] mt-[10px] text-[15px] leading-[22px] text-[#333]">각도</div>
      <table className="w-full border-collapse text-[15px] text-center text-[#333] mt-[5px]">
        <tbody>
          <tr className="h-[25px] bg-[#ded0b4]">
            <td className="border border-[#9a8f7a] w-1/2 leading-none">시작 각도</td>
            <td className="border border-[#9a8f7a] leading-none">끝 각도</td>
          </tr>
          <tr className="h-[32px]">
            <td className="border border-[#9a8f7a] leading-none"><span className="text-[14px] font-bold text-[#e00010]">0</span></td>
            <td className="border border-[#9a8f7a] leading-none"><span className="text-[14px] font-bold text-[#e00010]">0</span></td>
          </tr>
        </tbody>
      </table>
      <div className="pl-[14px] mt-[20px] text-[15px] leading-[22px] text-[#333]">축 벡터</div>
      <table className="w-full border-collapse text-[14px] text-center text-[#333] mt-[6px] table-fixed">
        <tbody>
          <tr className="h-[24px] bg-[#ded0b4]">
            <td className="border border-[#9a8f7a] w-[59px] leading-none">축</td>
            <td className="border border-[#9a8f7a] w-[105px] leading-none">X축</td>
            <td className="border border-[#9a8f7a] w-[103px] leading-none">Y축</td>
            <td className="border border-[#9a8f7a] leading-none">Z축</td>
          </tr>
          <tr className="h-[33px]">
            <td className="border border-[#9a8f7a] leading-none">장축</td>
            <td className="border border-[#9a8f7a] leading-none">1500</td>
            <td className="border border-[#9a8f7a] leading-none">0</td>
            <td className="border border-[#9a8f7a] leading-none">0</td>
          </tr>
          <tr className="h-[31px]">
            <td className="border border-[#9a8f7a] leading-none">단축</td>
            <td className="border border-[#9a8f7a] leading-none">0</td>
            <td className="border border-[#9a8f7a] leading-none">933.5141</td>
            <td className="border border-[#9a8f7a] leading-none">0</td>
          </tr>
        </tbody>
      </table>
    </div>
  );
}

export default function App() {
  return (
    <div className="w-[3340px] h-[1776px] bg-white flex items-start pl-[85px] overflow-hidden font-['Noto_Sans','Noto_Sans_CJK_KR',sans-serif]">
      <div className="w-[2793px] shrink-0 flex flex-col">
        {/* toolbar card */}
        <div className="ml-[93px] mt-[80px] w-[1281px] h-[170px] rounded-[8px] p-[2px] bg-linear-to-br from-[#ffc400] via-[#e8d9a8] to-[#ffe680] shadow-[-4px_6px_10px_rgba(0,0,0,.3)]">
          <div className="h-full rounded-[7px] bg-white pl-[17px] pt-[74px]">
            <div className="w-[1244px] h-[74px] rounded-[4px] flex bg-linear-to-b from-[#191308] via-[#3a3221] to-[#26200f] border-b-2 border-[#0c0805]">
              {toolbar.map((s, i) => (
                <div key={s.title} className={`${s.w} shrink-0 flex flex-col items-center pt-[7px] ${i < 4 ? "border-r border-[#4a4330]" : ""}`}>
                  <div className={`${s.tab} h-[15px] bg-[#b5a583] text-[10px] font-bold text-[#1d170a] flex items-center justify-center whitespace-nowrap [clip-path:polygon(6%_0,94%_0,100%_100%,0_100%)]`}>{s.title}</div>
                  <div className="flex rounded-[3px] border border-[#5a5034] h-[45px] bg-linear-to-b from-[#2c2616] to-[#3a3322]">
                    {s.items.map(([Icon, label], j) => (
                      <div key={label} className={`w-[76px] flex flex-col items-center pt-[6px] ${j < s.items.length - 1 ? "border-r border-[#1e190e]" : ""}`}>
                        <Icon size={14} color="#ddd8c8" strokeWidth={1.500} />
                        <span className="text-[10px] leading-[14px] mt-[3px] text-[#e4e0d2] whitespace-nowrap">{label}</span>
                      </div>
                    ))}
                  </div>
                </div>
              ))}
            </div>
          </div>
        </div>

        {/* app window */}
        <div className="mt-[182px] flex flex-col">
          <TopBar />
          <div className="h-[924px] bg-[#dcdcdc] flex flex-col justify-between">
            <div className="flex items-start pl-[597px] pt-[36px]">
              <LayerPanel />
              <ColorPanel />
              <LinePanel />
              <TextPanel />
              <DimPanel />
            </div>
            <LayoutTabs />
          </div>
          <BottomBar />
        </div>
      </div>

      {/* properties card */}
      <div className="ml-[10px] mt-[263px] w-[408px] h-[936px] rounded-[10px] p-[2px] bg-linear-to-br from-[#ffc400] via-[#d8cfa8] to-[#ffe680] shadow-[-6px_8px_14px_rgba(0,0,0,.3)]">
        <div className="h-full rounded-[9px] bg-white pl-[17px] pt-[88px]">
          <PropsPanel />
        </div>
      </div>
    </div>
  );
}
